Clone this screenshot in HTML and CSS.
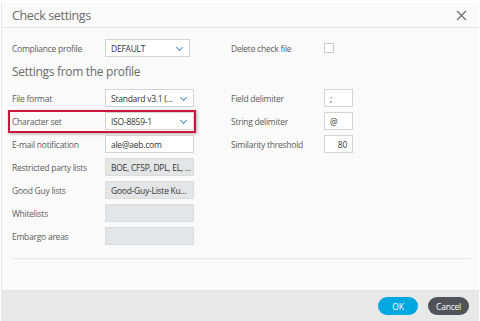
FILE: index.html
```html
<!DOCTYPE html>
<html lang="en">
<head>
  <meta charset="UTF-8">
  <title>Check settings</title>
  <link rel="stylesheet" href="styles.css">
</head>
<body>
  <div class="dialog">
    <div class="dialog-header">
      <span class="dialog-title">Check settings</span>
      <svg class="close-icon" width="11" height="11" viewBox="0 0 11 11">
        <path d="M1 1 L10 10 M10 1 L1 10" stroke="#666" stroke-width="1.1" fill="none"/>
      </svg>
    </div>
    <div class="dialog-body">
      <div class="columns">
        <div class="col-left">
          <div class="row">
            <span class="label">Compliance profile</span>
            <div class="field select narrow">DEFAULT<span class="chevron"></span></div>
          </div>
        </div>
        <div class="col-right">
          <div class="row">
            <span class="label">Delete check file</span>
            <span class="checkbox"></span>
          </div>
        </div>
      </div>
      <h3 class="section-title">Settings from the profile</h3>
      <div class="columns">
        <div class="col-left">
          <div class="row">
            <span class="label">File format</span>
            <div class="field select">Standard v3.1 (...<span class="chevron"></span></div>
          </div>
          <div class="row highlight">
            <span class="label">Character set</span>
            <div class="field select">ISO-8859-1<span class="chevron"></span></div>
          </div>
          <div class="row">
            <span class="label">E-mail notification</span>
            <div class="field">ale@aeb.com</div>
          </div>
          <div class="row">
            <span class="label">Restricted party lists</span>
            <div class="field disabled">BOE, CFSP, DPL, EL, ...</div>
          </div>
          <div class="row">
            <span class="label">Good Guy lists</span>
            <div class="field disabled">Good-Guy-Liste Ku...</div>
          </div>
          <div class="row">
            <span class="label">Whitelists</span>
            <div class="field disabled"></div>
          </div>
          <div class="row">
            <span class="label">Embargo areas</span>
            <div class="field disabled"></div>
          </div>
        </div>
        <div class="col-right">
          <div class="row">
            <span class="label">Field delimiter</span>
            <div class="field small">;</div>
          </div>
          <div class="row">
            <span class="label">String delimiter</span>
            <div class="field small">@</div>
          </div>
          <div class="row">
            <span class="label">Similarity threshold</span>
            <div class="field small number">80</div>
          </div>
        </div>
      </div>
      <div class="separator"></div>
    </div>
    <div class="dialog-footer">
      <button class="btn btn-ok">OK</button>
      <button class="btn btn-cancel">Cancel</button>
    </div>
  </div>
</body>
</html>
```

FILE: styles.css
```css
body {
  margin: 0;
  background-color: #ffffff;
  font-family: 'Open Sans', sans-serif;
}
.dialog {
  margin: 3px 1px 0 1px;
  height: 318px;
  background-color: #fafafa;
  border-left: 1px solid #e6e6e6;
  box-sizing: border-box;
  display: flex;
  flex-direction: column;
}
.dialog-header {
  height: 24px;
  display: flex;
  align-items: center;
  justify-content: space-between;
  padding: 0 12px 0 10px;
  border-bottom: 1px solid #e6e6e6;
}
.dialog-title {
  font-size: 12.5px;
  letter-spacing: -0.35px;
  color: #6a6a6a;
}
.dialog-body {
  flex: 1;
  padding: 11px 8px 0 10px;
}
.columns {
  display: flex;
}
.col-left {
  width: 219px;
  display: flex;
  flex-direction: column;
  gap: 5px;
}
.col-right {
  display: flex;
  flex-direction: column;
  gap: 5px;
}
.row {
  display: flex;
  align-items: center;
  height: 18px;
  position: relative;
}
.label {
  width: 93px;
  font-size: 8.5px;
  letter-spacing: -0.25px;
  color: #5c5c5c;
  white-space: nowrap;
}
.field {
  width: 89px;
  height: 18px;
  box-sizing: border-box;
  border: 1px solid #d4d4d4;
  background-color: #ffffff;
  font-size: 8.5px;
  letter-spacing: -0.25px;
  color: #333333;
  padding: 0 5px;
  display: flex;
  align-items: center;
  position: relative;
  white-space: nowrap;
}
.field.narrow {
  width: 85px;
}
.field.small {
  width: 29px;
}
.field.number {
  justify-content: flex-end;
}
.field.disabled {
  background-color: #e3e5e7;
  border-color: #dcdcdc;
}
.chevron {
  position: absolute;
  right: 7px;
  top: 5px;
  width: 4px;
  height: 4px;
  border-right: 1px solid #4a8fd0;
  border-bottom: 1px solid #4a8fd0;
  transform: rotate(45deg);
}
.checkbox {
  width: 8px;
  height: 8px;
  border: 1px solid #c8c8c8;
  background-color: #ffffff;
}
.highlight::after {
  content: '';
  position: absolute;
  left: -4px;
  right: 35px;
  top: -2px;
  bottom: -3px;
  border: 2px solid #c9163d;
  box-shadow: 1px 1px 3px rgba(0, 0, 0, 0.3);
}
.section-title {
  font-size: 12px;
  letter-spacing: -0.3px;
  font-weight: normal;
  color: #6a6a6a;
  margin: 5px 0 7px;
  line-height: 20px;
}
.separator {
  border-top: 1px solid #e6e6e6;
  margin: 13px 0 0 0;
}
.dialog-footer {
  height: 30px;
  background-color: #e8e8e8;
  display: flex;
  align-items: center;
  justify-content: flex-end;
  gap: 10px;
  padding: 0 10px 0 0;
  border-top: 1px solid #e0e0e0;
}
.btn {
  height: 18px;
  border: none;
  border-radius: 9px;
  font-family: 'Open Sans', sans-serif;
  font-size: 8.5px;
  letter-spacing: -0.25px;
  color: #ffffff;
  padding: 0;
}
.btn-ok {
  width: 40px;
  background-color: #00a8e1;
}
.btn-cancel {
  width: 41px;
  background-color: #50545a;
}
```
